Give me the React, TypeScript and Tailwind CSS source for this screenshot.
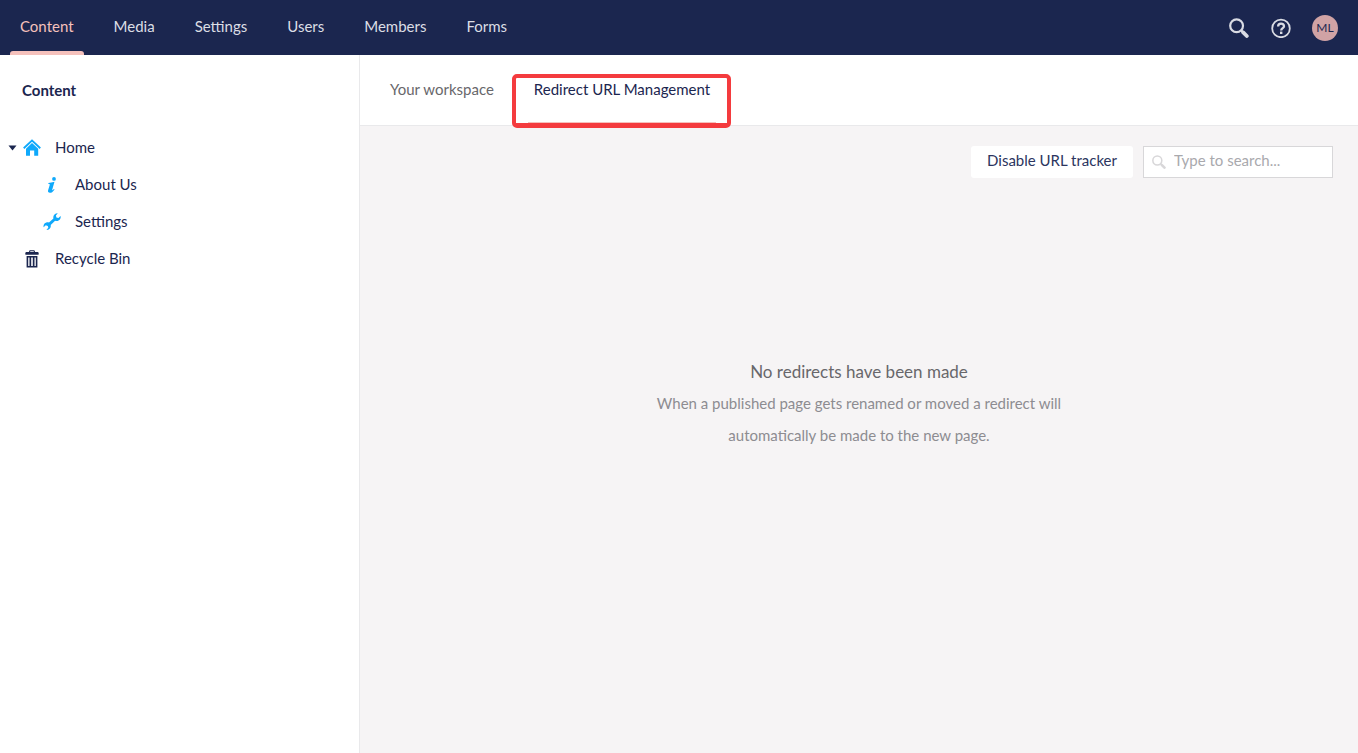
import React from "react";

const sections = ["Content", "Media", "Settings", "Users", "Members", "Forms"];

function MagnifierIcon({ className }: { className: string }) {
  return (
    <svg viewBox="0 0 20 20" className={className} fill="none" aria-hidden="true">
      <circle cx="7.6" cy="7.8" r="6.4" stroke="currentColor" strokeWidth="2.2" />
      <path d="M12.4 12.6 L14 14.2" stroke="currentColor" strokeWidth="2.4" />
      <path d="M14.2 14.4 L17.8 18" stroke="currentColor" strokeWidth="3.8" strokeLinecap="round" />
    </svg>
  );
}

function HelpIcon() {
  return (
    <svg viewBox="0 0 20 20" className="size-5" fill="none" aria-hidden="true">
      <circle cx="10" cy="10.4" r="8.8" stroke="currentColor" strokeWidth="1.8" />
      <path
        d="M7.1 8.4 C7.1 4.7 13 4.8 13 8.2 C13 10.1 10.2 10.1 10.2 12.4"
        stroke="currentColor"
        strokeWidth="2.3"
      />
      <rect x="9" y="13.6" width="2.4" height="2.4" fill="currentColor" />
    </svg>
  );
}

function HomeIcon() {
  return (
    <svg viewBox="0 0 18 18" className="size-[18px] text-[#0fa9fb]" fill="currentColor" aria-hidden="true">
      <path d="M9 0.2 L17.9 8.6 L16.6 9.9 L9 2.8 L1.4 9.9 L0.1 8.6 Z" />
      <path d="M9 4 L15.2 9.8 V16.8 H11.2 V11.6 H7 V16.8 H3 V9.8 Z" />
    </svg>
  );
}

function InfoIcon() {
  return (
    <svg viewBox="0 0 18 18" className="size-[18px] text-[#0fa9fb]" fill="currentColor" aria-hidden="true">
      <circle cx="11" cy="2.9" r="1.9" />
      <path d="M5.4 7 C7.2 6.8 9.2 6.4 11.5 5.8 L9.2 13.7 C9 14.6 9.3 14.6 10.8 12.9 L11.6 13.4 C9.8 15.9 8.4 16.8 7 16.8 C5.3 16.8 4.7 15.7 5.1 14.3 L6.8 8.7 C7 8 6.6 7.9 5.4 7.9 Z" />
    </svg>
  );
}

function WrenchIcon() {
  return (
    <svg viewBox="0 0 18 18" className="size-[18px] text-[#0fa9fb]" fill="currentColor" aria-hidden="true">
      <path d="M14.8 0.2 L12.9 2.5 L13.4 4.4 L15.4 5 L17.6 3.1 C18.1 5.5 16.8 7.5 14.7 8 C13.7 8.2 12.9 8.1 12.1 7.8 L7.7 12 C8.3 14.6 6.6 17 3.4 17 L5.3 14.8 L4.8 12.9 L2.8 12.3 L0.6 14.2 C0.1 11.8 1.4 9.9 3.4 9.4 C4.4 9.2 5.2 9.3 6 9.6 L10.4 5.4 C9.8 2.7 11.6 0.2 14.8 0.2 Z" />
    </svg>
  );
}

function TrashIcon() {
  return (
    <svg viewBox="0 0 18 18" className="size-[18px] text-[#1b264f]" aria-hidden="true">
      <path d="M6.3 2.4 L7 0.8 H11 L11.7 2.4" fill="none" stroke="currentColor" strokeWidth="1.1" />
      <path d="M3.4 2 H14.6 Q15.6 2 15.6 3.2 V4.8 H2.4 V3.2 Q2.4 2 3.4 2 Z" fill="currentColor" />
      <path
        fillRule="evenodd"
        fill="currentColor"
        d="M3.6 6 H14.4 V17.4 H3.6 Z M5.2 7.4 V16 H6.5 V7.4 Z M8.2 7.4 V16 H9.8 V7.4 Z M11.5 7.4 V16 H12.8 V7.4 Z"
      />
    </svg>
  );
}

function TreeItem({ icon, label, nested, open }: { icon: React.ReactNode; label: string; nested?: boolean; open?: boolean }) {
  return (
    <div className={nested ? "flex h-[37px] items-center pl-7" : "flex h-[37px] items-center pl-2"}>
      {open ? (
        <button aria-label={`Collapse ${label}`} className="w-[15px]">
          <svg viewBox="0 0 9 6" className="h-1.5 w-[9px]" fill="#1b264f" aria-hidden="true">
            <path d="M0.5 0.5 H8.5 L4.5 5.5 Z" />
          </svg>
        </button>
      ) : (
        <span className="w-[15px]" />
      )}
      <a href="#" className="flex items-center gap-3.5">
        <span className="pt-px">{icon}</span>
        <span className="pb-0.5">{label}</span>
      </a>
    </div>
  );
}

export default function App() {
  return (
    <div className="flex min-h-screen flex-col bg-white font-['Lato',sans-serif] text-[15px] leading-5 text-[#1b264f]">
      <header className="flex h-[55px] items-center justify-between bg-[#1b264f] pr-5">
        <nav className="flex h-full gap-5 pl-2.5">
          {sections.map((name, i) => (
            <a
              key={name}
              href="#"
              aria-current={i === 0 ? "page" : undefined}
              className={
                i === 0
                  ? "flex flex-col justify-between px-2.5 pt-4 text-[#f5c1bc]"
                  : "flex flex-col justify-between px-2.5 pt-4 text-[#dcdee5]"
              }
            >
              {name}
              {i === 0 && <span className="-mx-2.5 h-1 rounded-t-[3px] bg-[#f5c1bc]" />}
            </a>
          ))}
        </nav>
        <div className="flex items-center text-[#d9dbe3]">
          <button aria-label="Search" className="mr-[22px]">
            <MagnifierIcon className="size-5" />
          </button>
          <button aria-label="Help" className="mr-[21px]">
            <HelpIcon />
          </button>
          <button className="size-[26px] rounded-full bg-[#d0a3a5] text-xs text-[#1b264f]">ML</button>
        </div>
      </header>

      <div className="flex grow">
        <aside className="w-[360px] shrink-0 border-r border-[#e9e9eb]">
          <h2 className="px-[22px] pt-[25px] pb-[29px] font-bold">Content</h2>
          <nav>
            <TreeItem icon={<HomeIcon />} label="Home" open />
            <TreeItem icon={<InfoIcon />} label="About Us" nested />
            <TreeItem icon={<WrenchIcon />} label="Settings" nested />
            <TreeItem icon={<TrashIcon />} label="Recycle Bin" />
          </nav>
        </aside>

        <main className="flex min-w-0 grow flex-col bg-[#f6f4f5]">
          <div className="flex h-[71px] gap-10 border-b border-[#e9e9eb] bg-white px-[30px]">
            <button className="h-full pb-0.5 text-[#68676b]">Your workspace</button>
            <div className="relative">
              <button className="h-full pb-0.5">Redirect URL Management</button>
              <span className="pointer-events-none absolute -inset-x-1.5 top-[67px] h-1 bg-[#f5c1bc]" />
              <span className="pointer-events-none absolute -right-[21px] -left-[22px] top-[19px] h-[54px] rounded-[5px] border-4 border-b-5 border-[#f43b3e]" />
            </div>
          </div>

          <div className="flex justify-end gap-2.5 pt-5 pr-[25px]">
            <button className="h-8 rounded-[3px] bg-white px-4 pb-1 text-[#2c3560]">Disable URL tracker</button>
            <label className="flex h-8 w-[190px] items-center border border-[#d8d7d9] bg-white pl-2">
              <MagnifierIcon className="size-3.5 shrink-0 text-[#d8d7d9]" />
              <input
                type="text"
                aria-label="Search redirects"
                placeholder="Type to search..."
                className="h-full w-full min-w-0 bg-transparent pb-1 pl-2 outline-none placeholder:text-[#a9a9ad]"
              />
            </label>
          </div>

          <section className="mx-auto mt-[178px] w-[420px] text-center text-[#8d8c91]">
            <h3 className="text-[17px] leading-8 text-[#68676b]">No redirects have been made</h3>
            <p className="-mt-px leading-8">
              When a published page gets renamed or moved a redirect will automatically be made to the new page.
            </p>
          </section>
        </main>
      </div>
    </div>
  );
}
